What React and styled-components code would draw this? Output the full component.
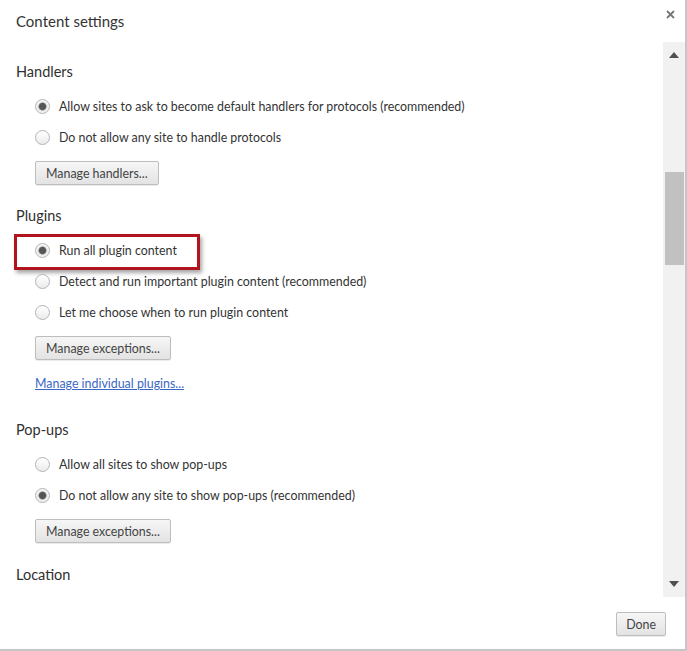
import styled, { createGlobalStyle } from "styled-components"

const Global = createGlobalStyle`
  html, body { margin: 0; padding: 0; background: #ffffff; }
  body { font-family: "Segoe UI", Lato, "Open Sans", sans-serif; }
`

const sections = [
  {
    title: "Handlers",
    options: [
      { label: "Allow sites to ask to become default handlers for protocols (recommended)", checked: true },
      { label: "Do not allow any site to handle protocols" },
    ],
    button: "Manage handlers...",
    gap: 20,
  },
  {
    title: "Plugins",
    options: [
      { label: "Run all plugin content", checked: true, marked: true },
      { label: "Detect and run important plugin content (recommended)" },
      { label: "Let me choose when to run plugin content" },
    ],
    button: "Manage exceptions...",
    link: "Manage individual plugins...",
    gap: 21,
  },
  {
    title: "Pop-ups",
    options: [
      { label: "Allow all sites to show pop-ups" },
      { label: "Do not allow any site to show pop-ups (recommended)", checked: true },
    ],
    button: "Manage exceptions...",
    gap: 26,
  },
  { title: "Location", options: [], gap: 22 },
]

export default function App() {
  return (
    <>
      <Global />
      <Dialog>
        <Header>
          <Title>Content settings</Title>
          <Close>
            <svg width="9" height="9" viewBox="0 0 9 9">
              <path d="M1 1 L8 8 M8 1 L1 8" stroke="#777777" strokeWidth="1.8" />
            </svg>
          </Close>
        </Header>
        <Body>
          <Content>
            {sections.map((s) => (
              <Section key={s.title} top={s.gap}>
                <Heading>{s.title}</Heading>
                {s.options.length > 0 && (
                  <Options>
                    {s.options.map((o) => (
                      <Row key={o.label}>
                        <Radio checked={o.checked} />
                        <Label>{o.label}</Label>
                        {o.marked && <Highlight />}
                      </Row>
                    ))}
                  </Options>
                )}
                {s.button && <Button>{s.button}</Button>}
                {s.link && <Link href="#">{s.link}</Link>}
              </Section>
            ))}
          </Content>
          <Scrollbar>
            <Arrow>
              <svg width="10" height="6" viewBox="0 0 10 6"><path d="M0 6 L5 0 L10 6 Z" fill="#505050" /></svg>
            </Arrow>
            <Track>
              <Thumb />
            </Track>
            <Arrow>
              <svg width="10" height="6" viewBox="0 0 10 6"><path d="M0 0 L5 6 L10 0 Z" fill="#505050" /></svg>
            </Arrow>
          </Scrollbar>
        </Body>
        <Footer>
          <DoneButton>Done</DoneButton>
        </Footer>
      </Dialog>
    </>
  )
}

const Dialog = styled.div`
  width: 687px;
  height: 651px;
  box-sizing: border-box;
  border-right: 2px solid #c6c6c6;
  border-bottom: 2px solid #c6c6c6;
  display: flex;
  flex-direction: column;
  background: #ffffff;
  overflow: hidden;
`

const Header = styled.div`
  height: 42px;
  display: flex;
  justify-content: space-between;
  align-items: flex-start;
  padding-left: 16px;
  padding-right: 10px;
  box-sizing: border-box;
`

const Title = styled.h1`
  margin: 0;
  font-size: 15px;
  font-weight: 400;
  line-height: 42px;
  color: #333333;
`

const Close = styled.span`
  margin-top: 10px;
  display: flex;
`

const Body = styled.div`
  height: 555px;
  display: flex;
`

const Content = styled.div`
  flex: 1;
  overflow: hidden;
`

const Section = styled.section`
  padding-top: ${(props) => props.top}px;
  display: flex;
  flex-direction: column;
  align-items: flex-start;
`

const Heading = styled.h2`
  margin: 0 0 0 16px;
  font-size: 14.5px;
  font-weight: 400;
  line-height: 20px;
  color: #303030;
`

const Options = styled.div`
  margin-top: 9px;
  display: flex;
  flex-direction: column;
`

const Row = styled.div`
  position: relative;
  height: 31px;
  display: flex;
  align-items: center;
  padding-left: 35px;
`

const Radio = styled.span`
  width: 13px;
  height: 13px;
  border-radius: 50%;
  border: 1px solid #b4b4b4;
  background: ${(props) =>
    props.checked
      ? "radial-gradient(circle, #555555 0 3px, #7a7a7a 3.5px, #ececec 4.5px, #f6f6f6 100%)"
      : "linear-gradient(#ffffff, #ebebeb)"};
  box-shadow: inset 0 1px 1px rgba(255, 255, 255, 0.8);
  flex-shrink: 0;
`

const Label = styled.span`
  margin-left: 9px;
  font-size: 12.4px;
  color: #333333;
  white-space: nowrap;
`

const Highlight = styled.span`
  position: absolute;
  left: 14px;
  top: -1px;
  width: 186px;
  height: 36px;
  box-sizing: border-box;
  border: 3px solid #b1141d;
  box-shadow: 2px 3px 4px rgba(0, 0, 0, 0.35);
`

const Button = styled.button`
  margin: 8px 0 0 35px;
  height: 24px;
  padding: 0 10px;
  font-family: inherit;
  font-size: 12.4px;
  color: #444444;
  background: linear-gradient(#f6f6f6, #e3e3e3);
  border: 1px solid #bdbdbd;
  border-radius: 2px;
  box-shadow: 0 1px 0 rgba(0, 0, 0, 0.08);
`

const Link = styled.a`
  margin: 14px 0 0 35px;
  font-size: 12.4px;
  line-height: 20px;
  color: #3a67c4;
  text-decoration: underline;
`

const Scrollbar = styled.div`
  width: 22px;
  background: #f1f1f1;
  display: flex;
  flex-direction: column;
`

const Arrow = styled.div`
  height: 26px;
  display: flex;
  align-items: center;
  justify-content: center;
`

const Track = styled.div`
  flex: 1;
  padding-top: 104px;
  display: flex;
  justify-content: center;
`

const Thumb = styled.div`
  width: 19px;
  height: 93px;
  background: #c1c1c1;
`

const Footer = styled.div`
  flex: 1;
  display: flex;
  justify-content: flex-end;
  align-items: flex-start;
  padding: 15px 19px 0 0;
`

const DoneButton = styled(Button)`
  margin: 0;
  height: 24px;
  padding: 0 9px;
`
